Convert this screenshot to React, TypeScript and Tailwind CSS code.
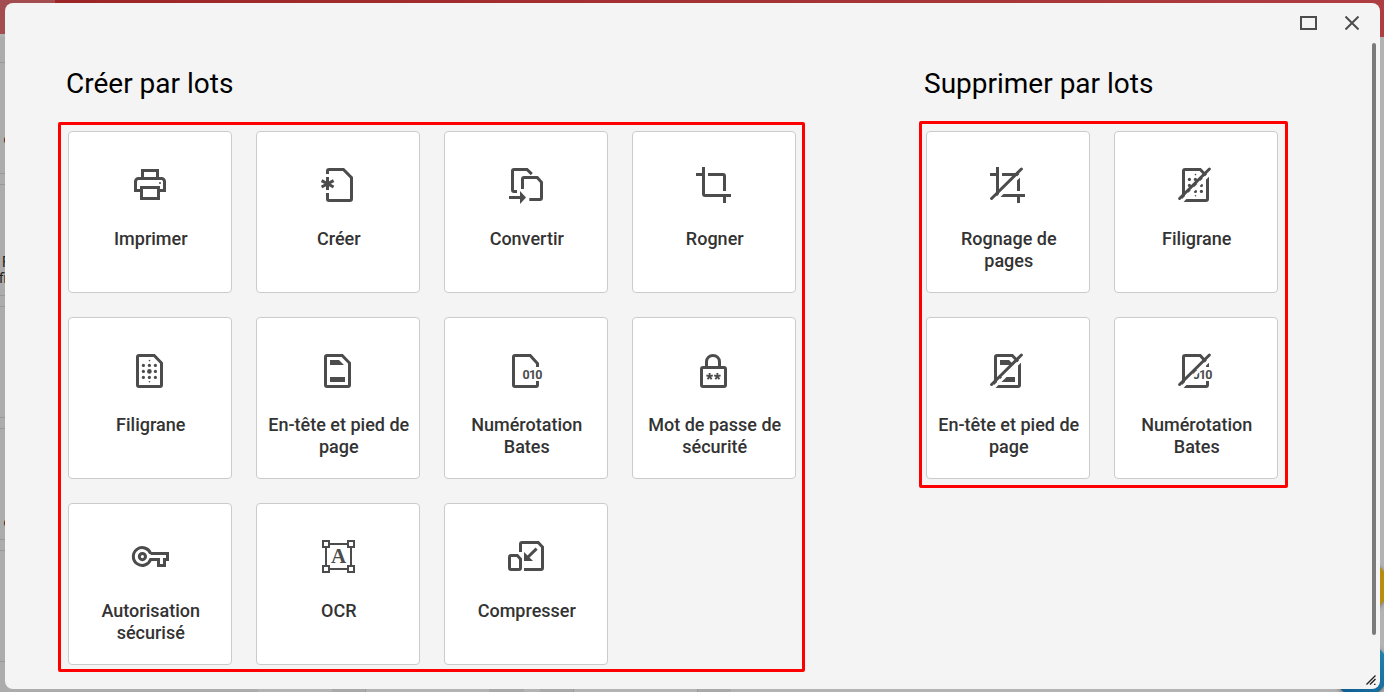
import React from "react";

const DOC = "M13 8.5H28.2L35.5 16V38a1.5 1.5 0 0 1-1.5 1.5H13a1.5 1.5 0 0 1-1.5-1.5V10a1.5 1.5 0 0 1 1.5-1.5z";

const Icon = ({ children, removed = false }: { children: React.ReactNode; removed?: boolean }) => (
  <svg
    width="48"
    height="48"
    viewBox="0 0 48 48"
    fill="none"
    stroke="#4c4c4c"
    strokeWidth="3"
    className="block shrink-0"
  >
    {children}
    {removed && (
      <>
        <path d="M9.6 40.6 40.2 10.4" stroke="#fff" strokeWidth="3" />
        <path d="M7.6 37.5 37.4 8" strokeLinecap="round" strokeWidth="3" />
      </>
    )}
  </svg>
);

const Printer = () => (
  <>
    <path d="M16.5 17V9.5h15V17" />
    <path d="M15 29.5H9.5V20.5a3 3 0 0 1 3-3h23a3 3 0 0 1 3 3v9H33" />
    <path d="M15.5 26.5h17v11h-17z" />
    <path d="M33 22h2" stroke="#777" strokeWidth="2" />
  </>
);

const Create = () => (
  <>
    <path d="M13.5 13v-3a1.5 1.5 0 0 1 1.5-1.5h14.4l8.1 8.1V38a1.5 1.5 0 0 1-1.5 1.5H15a1.5 1.5 0 0 1-1.5-1.5v-6" />
    <path d="M13.5 16v13" />
    <path d="m7.6 19.6 12 6.4M19.6 19.6 7.6 26" strokeWidth="3" />
  </>
);

const Convert = () => (
  <>
    <path d="M15 30.5h-3a1.500 1.500 0 0 1-1.500-1.500V10a1.500 1.500 0 0 1 1.500-1.500h13l4.800 4.600" />
    <path d="M20.500 28V18a1.500 1.500 0 0 1 1.500-1.500h13.200l4.300 4.800V37a1.500 1.500 0 0 1-1.500 1.500H27.300" />
    <path d="M7 36.5h12" />
    <path d="m18 30 6 6.5-6 6.5z" fill="#4c4c4c" stroke="none" />
  </>
);

const Crop = () => (
  <>
    <path d="M13.5 6v27a1.5 1.5 0 0 0 1.5 1.5H41" />
    <path d="M6 13.5h8M34.5 34v8" />
    <path d="M18 13.5h15a1.5 1.5 0 0 1 1.5 1.5V30" />
  </>
);

const Watermark = () => (
  <>
    <path d={DOC} />
    <g fill="#4c4c4c" stroke="none">
      {[17.4, 23.4, 29.4].map((x) =>
        [18.4, 24.4, 30.4].map((y) => (
          <circle key={`${x}-${y}`} cx={x} cy={y} r={x === 23.4 && y === 24.4 ? 2.3 : 1.6} />
        ))
      )}
      <circle cx="23.5" cy="13.6" r=".8" />
      <circle cx="23.5" cy="34.8" r=".8" />
    </g>
  </>
);

const HeaderFooter = () => (
  <>
    <path d={DOC} />
    <path d="M16 13h9l5 5H16zM16 30h15v5H16z" fill="#4c4c4c" stroke="none" />
  </>
);

const Bates = () => (
  <>
    <path d="M35.5 20v-3.400L28.200 8.500H13a1.500 1.500 0 0 0-1.500 1.500v28a1.500 1.500 0 0 0 1.500 1.500h21a1.500 1.500 0 0 0 1.500-1.500V34" />
    <text x="20.5" y="32" textLength="20" fill="#4c4c4c" stroke="none" className="font-[Roboto,sans-serif] text-[12.5px] font-bold">
      010
    </text>
  </>
);

const Lock = () => (
  <>
    <path d="M16.5 20v-5.3a6.5 6.3 0 0 1 13 0V20" />
    <rect x="11.5" y="20.5" width="24" height="19" rx="1.5" />
    <path
      d="M19.6 26v3.400l-3.200-1M19.600 29.400l3.200-1M19.600 29.400l-2 2.800M19.600 29.400l2 2.800M27.400 26v3.400l-3.200-1M27.400 29.400l3.200-1M27.400 29.400l-2 2.800M27.400 29.400l2 2.800"
      strokeWidth="1.9"
    />
  </>
);

const Key = () => (
  <>
    <path d="M24.6 20.5H41.5v6h-3v6h-6v-6h-7.9a8.900 8.900 0 1 1 0-6" />
    <circle cx="16.4" cy="23.6" r="3.1" />
  </>
);

const Ocr = () => (
  <>
    <path d="M16 11h17M16 36h17M12 15v17M37 15v17" strokeWidth="2" />
    <path d="M9 8h6v6H9zM34 8h6v6h-6zM9 33h6v6H9zM34 33h6v6h-6z" strokeWidth="2" />
    <text x="24.5" y="30" textAnchor="middle" fill="#4c4c4c" stroke="none" className="font-['Liberation_Serif',serif] text-[21px] font-bold">
      A
    </text>
  </>
);

const Compress = () => (
  <>
    <path d="M18.5 19v-8a1.500 1.500 0 0 1 1.500-1.500h16.200l4.300 4.600V35a1.500 1.500 0 0 1-1.500 1.500H22" />
    <path d="M9 22.500h6.300l3.200 3.600V35a1.500 1.500 0 0 1-1.500 1.500H9A1.500 1.500 0 0 1 7.500 35V24A1.500 1.500 0 0 1 9 22.500z" />
    <path d="m34.6 15.6-8.8 8.6" />
    <path d="M22 19v9h9z" fill="#4c4c4c" stroke="none" />
  </>
);

const createTools = [
  { icon: Printer, label: "Imprimer" },
  { icon: Create, label: "Créer" },
  { icon: Convert, label: "Convertir" },
  { icon: Crop, label: "Rogner" },
  { icon: Watermark, label: "Filigrane" },
  { icon: HeaderFooter, label: "En-tête et pied de page" },
  { icon: Bates, label: "Numérotation Bates" },
  { icon: Lock, label: "Mot de passe de sécurité" },
  { icon: Key, label: "Autorisation sécurisé" },
  { icon: Ocr, label: "OCR" },
  { icon: Compress, label: "Compresser" },
];

const removeTools = [
  { icon: Crop, label: "Rognage de pages" },
  { icon: Watermark, label: "Filigrane" },
  { icon: HeaderFooter, label: "En-tête et pied de page" },
  { icon: Bates, label: "Numérotation Bates" },
];

const ToolCard = ({ tool, removed }: { tool: (typeof createTools)[number]; removed?: boolean }) => (
  <button className="flex h-[162px] w-[164px] flex-col items-center rounded-[4px] border border-[#cbcbcb] bg-white px-[7px] pt-[29px]">
    <Icon removed={removed}>
      <tool.icon />
    </Icon>
    <span className="mt-[19px] pl-[1.5px] text-center text-[18px] leading-[22px] font-medium text-[#333]">{tool.label}</span>
  </button>
);

/* Dimmed application behind the dialog */
const Backdrop = () => (
  <div className="flex h-full flex-col bg-[#b3b3b3]">
    <div className="flex h-[37px] shrink-0">
      <div className="h-[34px] w-[55px] bg-[#a34d50]" />
      <div className="flex-1 bg-gradient-to-r from-[#9c2527] to-[#ad3d41]" />
    </div>
    <div className="flex min-h-0 flex-1">
      <div className="flex w-[258px] flex-col gap-[10px] overflow-hidden bg-[#acacac] pt-[25px] text-[14px] leading-4 text-[#222]">
        <div className="h-28 shrink-0 border-y border-[#999] pt-[68px] pl-[3.5px]">c</div>
        <div className="h-28 shrink-0 border-y border-[#999] pt-[69px]">
          <p className="pl-[2px]">F</p>
          <p className="-ml-px">fi</p>
        </div>
        <div className="h-28 shrink-0 border-y border-[#999]" />
        <div className="h-28 shrink-0 border-y border-[#999] pt-[85px] pl-[3.5px]">c</div>
        <div className="h-28 shrink-0 border-y border-[#999]" />
      </div>
      <div className="w-[74px]" />
      <div className="w-[34px] border-r border-[#999] bg-[#a9a9a9]" />
      <div className="w-[123px]" />
      <div className="w-[35px] bg-[#a9a9a9]" />
      <div className="w-[16px]" />
      <div className="w-[34px] border-r border-[#999] bg-[#a9a9a9]" />
      <div className="w-[124px] border-r border-[#999]" />
      <div className="w-[33px] bg-[#a9a9a9]" />
    </div>
  </div>
);

export default function App() {
  return (
    <main className="relative h-[692px] w-[1384px] overflow-hidden font-[Roboto,sans-serif]">
      <Backdrop />
      <div className="absolute top-[559px] left-[1334px] size-[54px] rounded-full bg-[#b88d0e] shadow-[0_1px_4px_#0006]" />
      <div className="absolute top-[642px] left-[1333px] size-14 rounded-full bg-gradient-to-tr from-[#0c5591] to-[#2589ab] shadow-[0_1px_4px_#0006]" />

      <div className="absolute top-[3px] left-[5px] flex h-[686px] w-[1375px] flex-col overflow-hidden rounded-[8px] bg-[#f4f4f4]">
        {/* Window controls */}
        <div className="flex h-10 shrink-0 items-center justify-end gap-[28px] pr-[21px]">
          <button className="h-[14px] w-[17px] border-2 border-[#4c4c4c]" aria-label="Agrandir" />
          <button aria-label="Fermer">
            <svg width="14" height="14" viewBox="0 0 14 14" stroke="#4c4c4c" strokeWidth="2">
              <path d="m.5.5 13 13M13.5.5l-13 13" />
            </svg>
          </button>
        </div>

        <div className="flex min-h-0 flex-1">
          <div className="flex flex-1 items-start pl-[53px]">
            <section className="pt-[25px]">
              <h2 className="pl-2 text-[28px] leading-8 text-black">Créer par lots</h2>
              <div className="mt-[22px] grid h-[550px] w-[747px] grid-cols-[repeat(4,164px)] content-start gap-6 rounded-[2px] border-[3px] border-[#ff0000] pt-[6px] pl-[7px]">
                {createTools.map((tool) => (
                  <ToolCard key={tool.label} tool={tool} />
                ))}
              </div>
            </section>

            <section className="ml-[114px] pt-[25px]">
              <h2 className="pl-[5px] text-[28px] leading-8 text-black">Supprimer par lots</h2>
              <div className="mt-[21px] grid h-[367px] w-[369px] grid-cols-[repeat(2,164px)] content-start gap-6 rounded-[2px] border-[3px] border-[#ff0000] pt-[7px] pl-[4px]">
                {removeTools.map((tool) => (
                  <ToolCard key={tool.label} tool={tool} removed />
                ))}
              </div>
            </section>
          </div>

          {/* Scrollbar and resize handle */}
          <div className="flex w-[14px] shrink-0 flex-col items-end justify-between pr-1 pb-[4px]">
            <div className="h-[592px] w-1 rounded-full bg-[#7b7b7b]" />
            <svg width="10" height="10" viewBox="0 0 10 10" stroke="#222" strokeWidth="1.4">
              <path d="M.5 9.5 9.5.5M4 9.5 9.5 4M8 9.5h1.5" />
            </svg>
          </div>
        </div>
      </div>
    </main>
  );
}
